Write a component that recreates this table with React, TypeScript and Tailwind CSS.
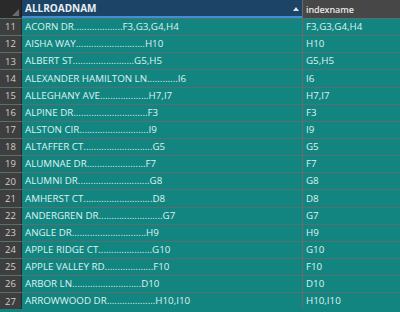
import React from "react";

const rows: { n: number; name: string; code: string; w: number }[] = [
  { n: 11, name: "ACORN DR", code: "F3,G3,G4,H4", w: 155 },
  { n: 12, name: "AISHA WAY", code: "H10", w: 138 },
  { n: 13, name: "ALBERT ST", code: "G5,H5", w: 137 },
  { n: 14, name: "ALEXANDER HAMILTON LN", code: "I6", w: 162 },
  { n: 15, name: "ALLEGHANY AVE", code: "H7,I7", w: 148 },
  { n: 16, name: "ALPINE DR", code: "F3", w: 132 },
  { n: 17, name: "ALSTON CIR", code: "I9", w: 132 },
  { n: 18, name: "ALTAFFER CT", code: "G5", w: 141 },
  { n: 19, name: "ALUMNAE DR", code: "F7", w: 132 },
  { n: 20, name: "ALUMNI DR", code: "G8", w: 138 },
  { n: 21, name: "AMHERST CT", code: "D8", w: 140 },
  { n: 22, name: "ANDERGREN DR", code: "G7", w: 150 },
  { n: 23, name: "ANGLE DR", code: "H9", w: 133 },
  { n: 24, name: "APPLE RIDGE CT", code: "G10", w: 146 },
  { n: 25, name: "APPLE VALLEY RD", code: "F10", w: 145 },
  { n: 26, name: "ARBOR LN", code: "D10", w: 135 },
  { n: 27, name: "ARROWWOOD DR", code: "H10,I10", w: 165 },
];

const FONT = '9.75px "Open Sans", "Noto Sans", sans-serif';

function buildLabel(name: string, code: string, w: number): string {
  let dots = 28;
  try {
    const c = document.createElement("canvas").getContext("2d");
    if (c) {
      c.font = FONT;
      const nw = c.measureText(name).width;
      const cw = c.measureText(code).width;
      const dw = c.measureText(".").width;
      dots = Math.max(3, Math.round((w - nw - cw) / dw));
    }
  } catch (e) {
    /* ignore */
  }
  return name + ".".repeat(dots) + code;
}

export default function App() {
  return (
    <div
      className="w-[400px] h-[312px] overflow-hidden bg-[#138580] flex flex-col"
      style={{ fontFamily: '"Open Sans", "Noto Sans", sans-serif' }}
    >
      {/* header */}
      <div className="flex h-[18px] shrink-0">
        <div className="w-[22px] bg-[#2a2a2a] relative border-r border-[#1c1c1c]">
          <svg className="absolute right-[2px] bottom-[2px]" width="7" height="7" viewBox="0 0 7 7">
            <polygon points="7,0 7,7 0,7" fill="#6b6b6b" />
          </svg>
        </div>
        <div className="w-[280px] bg-[#1b4467] border-b-2 border-[#3d90d8] flex items-center pl-[3px] pr-[4px] relative">
          <span className="text-[10px] font-bold text-[#e8eef4] leading-none">ALLROADNAM</span>
          <svg className="absolute right-[3px] top-[7px]" width="6" height="4" viewBox="0 0 6 4">
            <polygon points="3,0 6,4 0,4" fill="#d8e2ea" />
          </svg>
        </div>
        <div className="flex-1 bg-[#474747] border-l border-[#6a6a6a] flex items-center pl-[3px]">
          <span className="text-[9px] font-semibold tracking-[-0.1px] text-[#e6e6e6] leading-none">indexname</span>
        </div>
      </div>
      {/* rows */}
      {rows.map((r) => (
        <div key={r.n} className="flex h-[17.15px] shrink-0 border-t border-[#55706f]">
          <div className="w-[22px] bg-[#3e3e3e] border-r border-[#2a2a2a] flex items-center pl-[5px] text-[9.5px] text-[#cfcfcf] leading-none">
            {r.n}
          </div>
          <div className="w-[280px] flex items-center pl-[3px] text-[9.75px] text-[#dff2f0] leading-none whitespace-nowrap overflow-hidden">
            {buildLabel(r.name, r.code, r.w)}
          </div>
          <div className="flex-1 border-l border-[#6a6a6a] flex items-center pl-[3px] text-[9.75px] text-[#dff2f0] leading-none whitespace-nowrap">
            {r.code}
          </div>
        </div>
      ))}
    </div>
  );
}
